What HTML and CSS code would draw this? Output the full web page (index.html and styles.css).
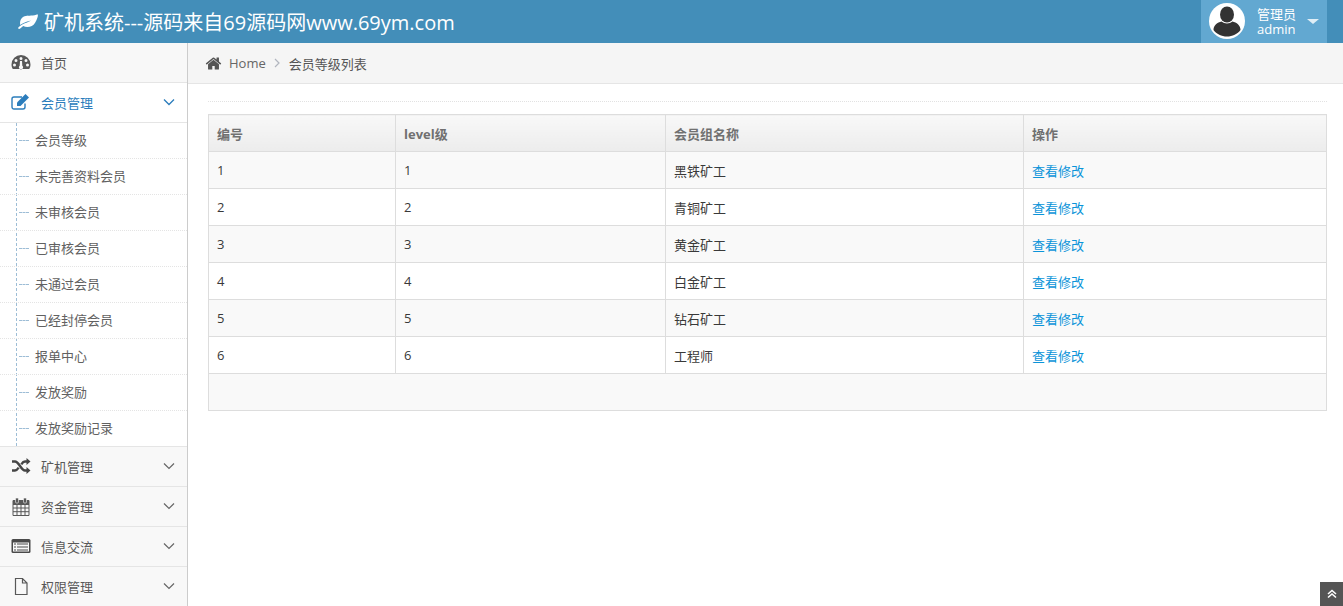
FILE: index.html
```html
<!DOCTYPE html>
<html lang="en">
<head>
    <meta charset="UTF-8">
    <meta name="viewport" content="width=device-width, initial-scale=1.0">
    <title>矿机系统</title>
    <link rel="stylesheet" href="styles.css">
</head>
<body>
    <div class="navbar">
        <div class="brand">
            <svg class="brand-icon" viewBox="0 0 20 16"><path d="M19.6 1.2c.5 1 .3 2.400-.2 3.500-.6 1.500-1.200 3.200-2.300 5-1.700 2.900-4.600 4.300-7.700 4.300-1.500 0-3-.4-4.200-1.100-.9.800-2 1.900-3 2.700-.5.400-1.500.5-1.900 0-.4-.5 0-1.200.5-1.600 1-.9 3-2.300 6-3.700 2.300-1 4.500-1.600 6.200-2.900-2.400.7-5.200 1.300-7.400 2.500-1.400.7-2.600 1.500-3.400 2.100C1.900 9.500 2 7.300 3.500 5.400 5.800 2.600 9.500 3.100 13 2.600c2.500-.3 4.800-.6 6.600-1.400z" fill="#fff"/></svg>
            <span>矿机系统---源码来自69源码网www.69ym.com</span>
        </div>
        <div class="user-box">
            <svg class="avatar" viewBox="0 0 36 36">
                <circle cx="18" cy="18" r="18" fill="#fff"/>
                <circle cx="18" cy="18" r="16" fill="#fff"/>
                <ellipse cx="18" cy="11.500" rx="7" ry="8" fill="#333"/>
                <path d="M4.500 27c0-5 4-7.500 8-8.500 1.500 1.300 3.500 2 5.500 2s4-.7 5.500-2c4 1 8 3.500 8 8.500-3 4-8 6.500-13.500 6.500S7.500 31 4.500 27z" fill="#333"/>
            </svg>
            <div class="user-text">
                <div>管理员</div>
                <div>admin</div>
            </div>
            <span class="caret"></span>
        </div>
    </div>

    <div class="main">
        <div class="sidebar">
            <div class="menu-item">
                <svg class="menu-icon" viewBox="0 0 20 16"><path fill-rule="evenodd" d="M10 1a9.500 9.500 0 0 0-9.500 9.500c0 1.800.5 3.300 1.300 4.500h16.400c.8-1.200 1.300-2.700 1.300-4.500A9.500 9.500 0 0 0 10 1zM10 3a1.500 1.500 0 1 1 0 3 1.500 1.500 0 0 1 0-3zM5 5a1.500 1.500 0 1 1 0 3 1.500 1.500 0 0 1 0-3zM15 5a1.500 1.500 0 1 1 0 3 1.500 1.500 0 0 1 0-3zM3.500 9.500a1.500 1.500 0 1 1 0 3 1.500 1.500 0 0 1 0-3zM16.500 9.500a1.500 1.500 0 1 1 0 3 1.500 1.500 0 0 1 0-3zM9 7h2l.3 4.800a2 2 0 1 1-2.600 0z" fill="#585858"/></svg>
                <span>首页</span>
            </div>
            <div class="menu-item active">
                <svg class="menu-icon" viewBox="0 0 20 16"><path d="M14 9.500V13a2 2 0 0 1-2 2H3a2 2 0 0 1-2-2V5a2 2 0 0 1 2-2h8" fill="none" stroke="#2b7dbc" stroke-width="1.400"/><path d="M6 8.500 14.500 0l3.500 3.500L9.500 12H6z" fill="#2b7dbc"/></svg>
                <span>会员管理</span>
                <svg class="angle" viewBox="0 0 12 8"><path d="M1 1.500 6 6.500l5-5" fill="none" stroke="#2b7dbc" stroke-width="1.300"/></svg>
            </div>
            <ul class="submenu">
                <li>会员等级</li>
                <li>未完善资料会员</li>
                <li>未审核会员</li>
                <li>已审核会员</li>
                <li>未通过会员</li>
                <li>已经封停会员</li>
                <li>报单中心</li>
                <li>发放奖励</li>
                <li>发放奖励记录</li>
            </ul>
            <div class="menu-item">
                <svg class="menu-icon" viewBox="0 0 20 16"><path d="M1 3.500h3c4 0 6 9 10 9h2M1 12.500h3c1.500 0 2.700-1.300 3.700-2.800M10.300 6.300c1-1.500 2.200-2.800 3.700-2.800h2" fill="none" stroke="#454545" stroke-width="2.400"/><path d="M15.500 0 19.500 3.500 15.500 7zM15.500 9l4 3.500-4 3.500z" fill="#454545"/></svg>
                <span>矿机管理</span>
                <svg class="angle" viewBox="0 0 12 8"><path d="M1 1.500 6 6.500l5-5" fill="none" stroke="#666" stroke-width="1.200"/></svg>
            </div>
            <div class="menu-item">
                <svg class="menu-icon tall" viewBox="0 0 17 19"><path d="M.5 3.500h16v15H.5zM.5 7.500h16M4.500 7.500v11M8.500 7.500v11M12.500 7.500v11M.5 11h16M.5 14.700h16" fill="none" stroke="#585858"/><path d="M.5 3.500h16v4H.5z" fill="#585858"/><rect x="3" y="1" width="3" height="5" rx="1" fill="#585858" stroke="#f8f8f8" stroke-width=".6"/><rect x="11" y="1" width="3" height="5" rx="1" fill="#585858" stroke="#f8f8f8" stroke-width=".6"/></svg>
                <span>资金管理</span>
                <svg class="angle" viewBox="0 0 12 8"><path d="M1 1.500 6 6.500l5-5" fill="none" stroke="#666" stroke-width="1.200"/></svg>
            </div>
            <div class="menu-item">
                <svg class="menu-icon" viewBox="0 0 20 16"><rect x=".5" y="1" width="19" height="14" rx="1.500" fill="#4a4a4a"/><rect x="2" y="4.500" width="16" height="9" fill="#f8f8f8"/><path d="M3 6h2M6 6h11M3 9h2M6 9h11M3 12h2M6 12h11" stroke="#4a4a4a" stroke-width="1.200"/></svg>
                <span>信息交流</span>
                <svg class="angle" viewBox="0 0 12 8"><path d="M1 1.500 6 6.500l5-5" fill="none" stroke="#666" stroke-width="1.200"/></svg>
            </div>
            <div class="menu-item">
                <svg class="menu-icon tall" viewBox="0 0 17 19"><path d="M3 1.500h7l4.500 4.500v11.500H3zM10 1.500V6h4.500" fill="none" stroke="#585858" stroke-width="1.200"/></svg>
                <span>权限管理</span>
                <svg class="angle" viewBox="0 0 12 8"><path d="M1 1.500 6 6.500l5-5" fill="none" stroke="#666" stroke-width="1.200"/></svg>
            </div>
        </div>

        <div class="content">
            <div class="breadcrumb">
                <svg class="home-icon" viewBox="0 0 1792 1792"><path d="M1472 992v480q0 26-19 45t-45 19h-384v-384h-256v384h-384q-26 0-45-19t-19-45v-480q0-1 .5-3t.5-3l575-474 575 474q1 2 1 6zm223-69l-62 74q-8 9-21 11h-3q-13 0-21-7l-692-577-692 577q-12 8-24 7-13-2-21-11l-62-74q-8-10-7-23.500t11-21.500l719-599q32-26 76-26t76 26l244 204v-195q0-14 9-23t23-9h192q14 0 23 9t9 23v408l219 182q10 8 11 21.500t-7 23.500z" fill="#555"/></svg>
                <span class="crumb-home">Home</span>
                <svg class="crumb-sep" viewBox="0 0 6 10"><path d="M1 1l4 4-4 4" fill="none" stroke="#b2b6bf" stroke-width="1.200"/></svg>
                <span class="crumb-page">会员等级列表</span>
            </div>
            <div class="page">
                <div class="divider"></div>
                <table class="grade-table">
                    <thead>
                        <tr>
                            <th class="col-id">编号</th>
                            <th class="col-level">level级</th>
                            <th class="col-name">会员组名称</th>
                            <th>操作</th>
                        </tr>
                    </thead>
                    <tbody>
                        <tr><td>1</td><td>1</td><td>黑铁矿工</td><td><a href="#">查看修改</a></td></tr>
                        <tr><td>2</td><td>2</td><td>青铜矿工</td><td><a href="#">查看修改</a></td></tr>
                        <tr><td>3</td><td>3</td><td>黄金矿工</td><td><a href="#">查看修改</a></td></tr>
                        <tr><td>4</td><td>4</td><td>白金矿工</td><td><a href="#">查看修改</a></td></tr>
                        <tr><td>5</td><td>5</td><td>钻石矿工</td><td><a href="#">查看修改</a></td></tr>
                        <tr><td>6</td><td>6</td><td>工程师</td><td><a href="#">查看修改</a></td></tr>
                        <tr class="table-foot"><td colspan="4"></td></tr>
                    </tbody>
                </table>
            </div>
        </div>
    </div>

    <a class="back-top" href="#">
        <svg viewBox="0 0 10 10"><path d="M1 5 5 1.500 9 5M1 8.500 5 5l4 3.500" fill="none" stroke="#fff" stroke-width="1.600"/></svg>
    </a>
</body>
</html>
```

FILE: styles.css
```css
html, body {
    height: 100%;
}

body {
    margin: 0;
    display: flex;
    flex-direction: column;
    overflow: hidden;
    background-color: #fff;
    color: #393939;
    font-family: "Open Sans", "Noto Sans CJK SC", sans-serif;
    font-size: 13px;
}

.navbar {
    flex: none;
    height: 43px;
    display: flex;
    justify-content: space-between;
    padding: 0 16px 0 18px;
    background-color: #438eb9;
    color: #fff;
}

.brand {
    display: flex;
    align-items: center;
    gap: 6px;
    font-size: 20px;
    padding-bottom: 1px;
}

.brand-icon {
    width: 20px;
    height: 16px;
}

.user-box {
    width: 126px;
    box-sizing: border-box;
    display: flex;
    align-items: center;
    padding-left: 8px;
    background-color: #62a8d1;
}

.avatar {
    width: 36px;
    height: 36px;
    margin-top: -1px;
}

.user-text {
    margin-left: 12px;
    font-size: 13px;
    line-height: 15px;
}

.caret {
    margin-left: 11px;
    border-top: 5px solid #fff;
    border-left: 6px solid transparent;
    border-right: 6px solid transparent;
    opacity: 0.8;
}

.main {
    flex: 1;
    display: flex;
    min-height: 0;
}

.sidebar {
    flex: none;
    width: 187px;
    background-color: #f2f2f2;
    border-right: 1px solid #ccc;
}

.menu-item {
    height: 40px;
    box-sizing: border-box;
    display: flex;
    align-items: center;
    padding-left: 11px;
    padding-bottom: 1px;
    background-color: #f8f8f8;
    border-bottom: 1px solid #e5e5e5;
    color: #585858;
}

.menu-item span {
    margin-left: 10px;
}

.menu-item.active {
    background-color: #fff;
    color: #2b7dbc;
}

.menu-icon {
    width: 20px;
    height: 16px;
    flex: none;
}

.menu-icon.tall {
    height: 19px;
}

.angle {
    width: 12px;
    height: 8px;
    margin-left: auto;
    margin-right: 12px;
}

.submenu {
    position: relative;
    list-style: none;
    margin: 0;
    padding: 0;
    background-color: #fff;
    border-bottom: 1px solid #e5e5e5;
    margin-top: 0;
}

.submenu::before {
    content: "";
    position: absolute;
    left: 16px;
    top: 0;
    bottom: 0;
    border-left: 1px dashed #9dbdd6;
}

.submenu li {
    position: relative;
    height: 36px;
    box-sizing: border-box;
    line-height: 35px;
    padding-left: 35px;
    color: #616161;
    border-top: 1px dotted #e4e4e4;
}

.submenu li:first-child {
    border-top: 0;
    height: 35px;
}

.submenu li::before {
    content: "";
    position: absolute;
    left: 19px;
    top: 17px;
    width: 10px;
    border-top: 1px dashed #9dbdd6;
}

.content {
    flex: 1;
    min-width: 0;
}

.breadcrumb {
    height: 41px;
    box-sizing: border-box;
    display: flex;
    align-items: center;
    padding-left: 17px;
    background-color: #f5f5f5;
    border-bottom: 1px solid #e5e5e5;
    color: #555;
}

.home-icon {
    width: 17px;
    height: 17px;
}

.crumb-home {
    margin-left: 7px;
    color: #666;
}

.crumb-sep {
    width: 6px;
    height: 10px;
    margin: 0 9px 0 8px;
}

.page {
    padding: 17px 16px 0 20px;
}

.divider {
    border-top: 1px dotted #e2e2e2;
    margin-bottom: 12px;
}

.grade-table {
    width: 100%;
    border-collapse: collapse;
    table-layout: fixed;
}

.grade-table th,
.grade-table td {
    height: 37px;
    box-sizing: border-box;
    padding: 0 8px;
    border: 1px solid #ddd;
    text-align: left;
}

.grade-table th {
    background: linear-gradient(#f8f8f8, #ececec);
    color: #707070;
    font-weight: bold;
}

.col-id {
    width: 187px;
}

.col-level {
    width: 270px;
}

.col-name {
    width: 358px;
}

.grade-table tbody tr:nth-child(odd) {
    background-color: #f9f9f9;
}

.grade-table a {
    color: #0b94d9;
    text-decoration: none;
}

.back-top {
    position: fixed;
    right: 0;
    bottom: 0;
    width: 23px;
    height: 24px;
    display: flex;
    align-items: center;
    justify-content: center;
    background-color: #555;
}

.back-top svg {
    width: 10px;
    height: 10px;
}
```
